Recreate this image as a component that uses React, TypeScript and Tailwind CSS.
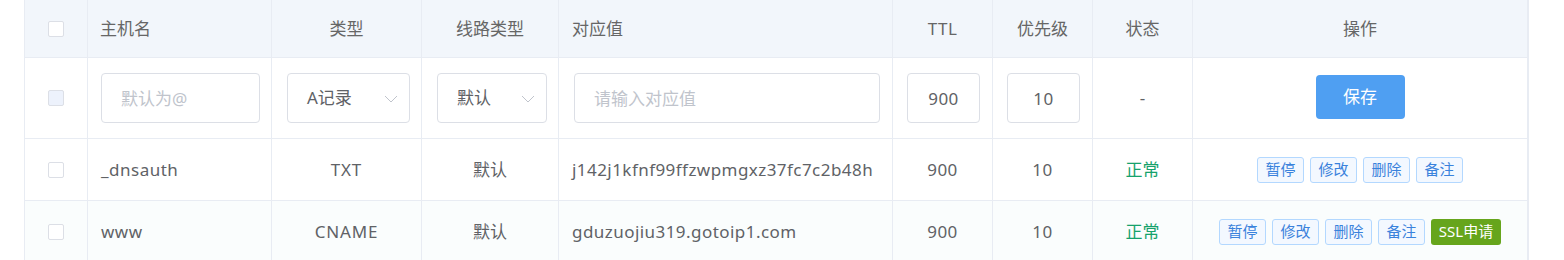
const cols = "grid grid-cols-[63px_184px_150px_137px_334px_100px_100px_100px_334px]";
const cell = "flex items-center border-r border-[#e8ecf3]";

function Checkbox({ disabled }: { disabled?: boolean }) {
  return (
    <span
      className={
        "inline-block h-[16px] w-[16px] rounded-[2px] border " +
        (disabled ? "border-[#dcdfe6] bg-[#edf2fc]" : "border-[#dcdfe6] bg-white")
      }
    />
  );
}

function Select({ value, width }: { value: string; width: string }) {
  return (
    <div
      className={
        "flex h-[50px] items-center justify-between rounded-[4px] border border-[#dcdfe6] bg-white pl-[19px] pr-[11px] text-[#606266] " +
        width
      }
    >
      <span>{value}</span>
      <svg width="14" height="8" viewBox="0 0 14 8" fill="none" className="mt-[2px]">
        <polyline points="1,1 7,7 13,1" stroke="#c0c4cc" strokeWidth="1" />
      </svg>
    </div>
  );
}

function ActionBtn({ label }: { label: string }) {
  return (
    <button className="h-[26px] w-[47px] rounded-[3px] border border-[#b3d8ff] bg-[#f3f8ff] text-[15px] leading-none text-[#3a82dc]">
      {label}
    </button>
  );
}

const records = [
  { host: "_dnsauth", type: "TXT", value: "j142j1kfnf99ffzwpmgxz37fc7c2b48h", ssl: false, bg: "bg-white" },
  { host: "www", type: "CNAME", value: "gduzuojiu319.gotoip1.com", ssl: true, bg: "bg-[#fafdfd]" },
];

export default function App() {
  return (
    <div
      className="h-[260px] w-[1564px] overflow-hidden bg-white text-[17px] text-[#606266]"
      style={{ fontFamily: '"Noto Sans", "Noto Sans CJK SC", sans-serif' }}
    >
      <div className="ml-[24px] w-[1505px] border-l border-r-2 border-[#e8ecf3]">
        {/* header */}
        <div className={cols + " h-[58px] border-b border-[#e8ecf3] bg-[#f2f6fb] text-[#666]"}>
          <div className={cell + " justify-center"}>
            <Checkbox />
          </div>
          <div className={cell + " pl-[12px]"}>主机名</div>
          <div className={cell + " justify-center"}>类型</div>
          <div className={cell + " justify-center"}>线路类型</div>
          <div className={cell + " pl-[13px]"}>对应值</div>
          <div className={cell + " justify-center tracking-[0.5px]"}>TTL</div>
          <div className={cell + " justify-center"}>优先级</div>
          <div className={cell + " justify-center"}>状态</div>
          <div className="flex items-center justify-center">操作</div>
        </div>

        {/* add row */}
        <div className={cols + " h-[81px] border-b border-[#e8ecf3]"}>
          <div className={cell + " justify-center"}>
            <Checkbox disabled />
          </div>
          <div className={cell + " pl-[13px]"}>
            <input
              className="h-[50px] w-[159px] rounded-[4px] border border-[#dcdfe6] pl-[19px] outline-none placeholder:text-[#c0c4cc]"
              placeholder="默认为@"
            />
          </div>
          <div className={cell + " pl-[15px]"}>
            <Select value="A记录" width="w-[123px]" />
          </div>
          <div className={cell + " pl-[15px]"}>
            <Select value="默认" width="w-[110px]" />
          </div>
          <div className={cell + " pl-[15px]"}>
            <input
              className="h-[50px] w-[306px] rounded-[4px] border border-[#dcdfe6] pl-[19px] outline-none placeholder:text-[#c0c4cc]"
              placeholder="请输入对应值"
            />
          </div>
          <div className={cell + " pl-[14px]"}>
            <input
              className="h-[50px] w-[73px] rounded-[4px] border border-[#dcdfe6] text-center tracking-[0.5px] outline-none"
              defaultValue="900"
            />
          </div>
          <div className={cell + " pl-[14px]"}>
            <input
              className="h-[50px] w-[73px] rounded-[4px] border border-[#dcdfe6] text-center tracking-[0.5px] outline-none"
              defaultValue="10"
            />
          </div>
          <div className={cell + " justify-center"}>-</div>
          <div className="flex items-center justify-center">
            <button className="mt-[-2px] h-[44px] w-[89px] rounded-[4px] bg-[#4f9ff2] text-[17px] text-white">保存</button>
          </div>
        </div>

        {records.map(r => (
          <div key={r.host} className={cols + " h-[62px] border-b border-[#e8ecf3] " + r.bg}>
            <div className={cell + " justify-center"}>
              <Checkbox />
            </div>
            <div className={cell + " pl-[13px] tracking-[0.5px]"}>{r.host}</div>
            <div className={cell + " justify-center tracking-[0.8px]"}>{r.type}</div>
            <div className={cell + " justify-center"}>默认</div>
            <div className={cell + " pl-[13px] tracking-[0.45px]"}>{r.value}</div>
            <div className={cell + " justify-center tracking-[0.5px]"}>900</div>
            <div className={cell + " justify-center tracking-[0.5px]"}>10</div>
            <div className={cell + " justify-center text-[#16a26c]"}>正常</div>
            <div className="flex items-center justify-center gap-[6px]">
              <ActionBtn label="暂停" />
              <ActionBtn label="修改" />
              <ActionBtn label="删除" />
              <ActionBtn label="备注" />
              {r.ssl && (
                <button className="h-[26px] w-[70px] rounded-[3px] bg-[#66a51c] text-[15px] leading-none text-white">
                  SSL申请
                </button>
              )}
            </div>
          </div>
        ))}
      </div>
    </div>
  );
}
